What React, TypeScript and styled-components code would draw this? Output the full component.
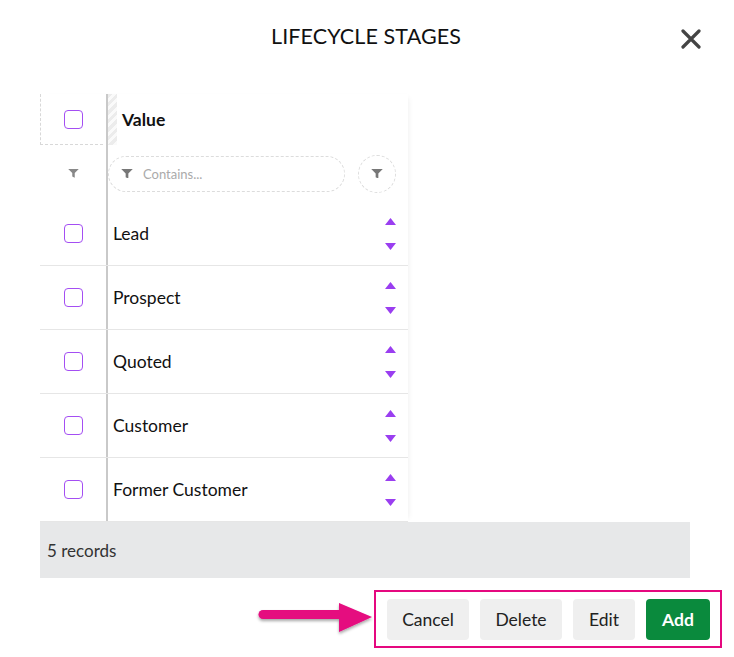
import React from "react";
import styled, { createGlobalStyle } from "styled-components";

const Global = createGlobalStyle`
  html, body { margin: 0; padding: 0; background: #fff; }
  body { font-family: Lato, "Open Sans", Arial, sans-serif; color: #111; }
  * { box-sizing: border-box; }
`;

const Page = styled.div`
  width: 734px;
  height: 657px;
  position: relative;
  overflow: hidden;
`;

const Header = styled.div`
  height: 94px;
  display: flex;
  align-items: flex-start;
  justify-content: center;
  padding-top: 23px;
  position: relative;
`;

const Title = styled.h1`
  margin: 0 0 0 -2px;
  font-size: 21.5px;
  font-weight: 400;
  letter-spacing: 0.1px;
  color: #111;
  line-height: 26px;
`;

const Close = styled.button`
  position: absolute;
  right: 32px;
  top: 28px;
  width: 22px;
  height: 22px;
  padding: 0;
  border: 0;
  background: none;
  display: flex;
  align-items: center;
  justify-content: center;
`;

const Table = styled.div`
  margin-left: 40px;
  width: 650px;
`;

const Grid = styled.div`
  width: 368px;
  box-shadow: 4px 0 6px -4px rgba(0, 0, 0, 0.08);
`;

const Row = styled.div<{ $h: number; $border?: boolean }>`
  display: flex;
  height: ${(p) => p.$h}px;
  border-bottom: ${(p) => (p.$border ? "1px solid #e6e6e6" : "none")};
`;

const CheckCell = styled.div<{ $dashed?: boolean }>`
  width: 66px;
  flex: none;
  display: flex;
  align-items: center;
  justify-content: center;
  position: relative;
  ${(p) =>
    p.$dashed
      ? `&::after{content:"";position:absolute;left:0;top:0;bottom:0;right:3px;border-left:1px dashed #d8d8d8;border-bottom:1px dashed #d8d8d8;pointer-events:none;}`
      : ""}
`;

const ValueCell = styled.div`
  flex: 1;
  border-left: 2px solid #c9c9c9;
  display: flex;
  align-items: center;
  position: relative;
`;

const Hatch = styled.div`
  width: 9px;
  align-self: stretch;
  background: repeating-linear-gradient(
    135deg,
    #ececec 0 3px,
    #fafafa 3px 6px
  );
`;

const HeadLabel = styled.span`
  font-size: 17.5px;
  font-weight: 700;
  margin-left: 5px;
  color: #111;
`;

const Box = styled.span`
  width: 19px;
  height: 19px;
  border: 1.5px solid #a44ef3;
  border-radius: 4px;
  background: #fff;
  display: block;
`;

const Pill = styled.div`
  width: 237px;
  height: 36px;
  border: 1px dashed #dcdcdc;
  border-radius: 18px;
  display: flex;
  align-items: center;
  padding-left: 12px;
  gap: 10px;
`;

const Placeholder = styled.span`
  font-size: 13px;
  color: #aaa;
`;

const CircleBtn = styled.div`
  width: 38px;
  height: 38px;
  border: 1px dashed #dcdcdc;
  border-radius: 50%;
  margin-left: 13px;
  display: flex;
  align-items: center;
  justify-content: center;
`;

const Label = styled.span`
  font-size: 17.5px;
  margin-left: 5px;
  color: #111;
  flex: 1;
`;

const Arrows = styled.div`
  width: 24px;
  margin-right: 6px;
  display: flex;
  flex-direction: column;
  align-items: center;
  gap: 18px;
`;

const Footer = styled.div`
  height: 56px;
  background: #e7e8e9;
  display: flex;
  align-items: center;
  padding-left: 7px;
  font-size: 17px;
  color: #333;
`;

const Actions = styled.div`
  display: flex;
  justify-content: flex-end;
  align-items: center;
  margin-top: 12px;
  padding-right: 12px;
`;

const Frame = styled.div`
  border: 2px solid #e5087f;
  height: 58px;
  display: flex;
  align-items: center;
  gap: 11px;
  padding: 0 10px 0 11px;
`;

const Btn = styled.button<{ $w: number; $primary?: boolean }>`
  width: ${(p) => p.$w}px;
  height: 41px;
  border: 0;
  border-radius: 4px;
  font-family: Lato, Arial, sans-serif;
  font-size: 17.5px;
  font-weight: ${(p) => (p.$primary ? 700 : 400)};
  background: ${(p) => (p.$primary ? "#0a8a3d" : "#efefef")};
  color: ${(p) => (p.$primary ? "#fff" : "#222")};
  padding: 0;
`;

const ArrowSvg = styled.svg`
  margin-right: -2px;
`;

const Filter = ({ size = 12, color = "#777" }: { size?: number; color?: string }) => (
  <svg width={size} height={size * 0.8} viewBox="0 0 12 10">
    <path d="M0 0H12L7.4 4.6V10L4.6 8.6V4.6Z" fill={color} />
  </svg>
);

const Tri = ({ up }: { up?: boolean }) => (
  <svg width="11" height="7" viewBox="0 0 11 7">
    <path d={up ? "M0 7L5.5 0L11 7Z" : "M0 0L11 0L5.5 7Z"} fill="#9a3ef0" />
  </svg>
);

const rows = ["Lead", "Prospect", "Quoted", "Customer", "Former Customer"];

export default function App() {
  return (
    <Page>
      <Global />
      <Header>
        <Title>LIFECYCLE STAGES</Title>
        <Close aria-label="close">
          <svg width="20" height="20" viewBox="0 0 20 20">
            <path d="M2 2L18 18M18 2L2 18" stroke="#444" strokeWidth="3.2" strokeLinecap="round" />
          </svg>
        </Close>
      </Header>
      <Table>
        <Grid>
          <Row $h={51}>
            <CheckCell $dashed>
              <Box />
            </CheckCell>
            <ValueCell>
              <Hatch />
              <HeadLabel>Value</HeadLabel>
            </ValueCell>
          </Row>
          <Row $h={57}>
            <CheckCell>
              <Filter size={11} color="#888" />
            </CheckCell>
            <ValueCell>
              <Pill>
                <Filter size={12} color="#777" />
                <Placeholder>Contains...</Placeholder>
              </Pill>
              <CircleBtn>
                <Filter size={12} color="#777" />
              </CircleBtn>
            </ValueCell>
          </Row>
          {rows.map((r) => (
            <Row key={r} $h={64} $border>
              <CheckCell>
                <Box />
              </CheckCell>
              <ValueCell>
                <Label>{r}</Label>
                <Arrows>
                  <Tri up />
                  <Tri />
                </Arrows>
              </ValueCell>
            </Row>
          ))}
        </Grid>
        <Footer>5 records</Footer>
      </Table>
      <Actions>
        <ArrowSvg width="122" height="40" viewBox="0 0 122 40">
          <defs>
            <filter id="sh" x="-20%" y="-40%" width="140%" height="200%">
              <feDropShadow dx="0" dy="2" stdDeviation="1.6" floodColor="#000" floodOpacity="0.35" />
            </filter>
          </defs>
          <g filter="url(#sh)">
            <path d="M9 15.5H86" stroke="#e5087f" strokeWidth="9" strokeLinecap="round" />
            <path d="M85 4L118 18L85 33Z" fill="#e5087f" />
          </g>
        </ArrowSvg>
        <Frame>
          <Btn $w={82}>Cancel</Btn>
          <Btn $w={82}>Delete</Btn>
          <Btn $w={62}>Edit</Btn>
          <Btn $w={64} $primary>Add</Btn>
        </Frame>
      </Actions>
    </Page>
  );
}
